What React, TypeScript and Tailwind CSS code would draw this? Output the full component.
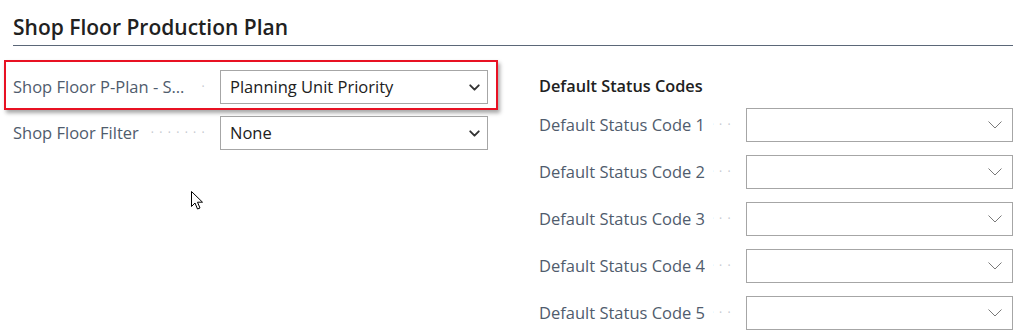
import { ChevronDown } from 'lucide-react'

const font = { fontFamily: '"Open Sans", "Noto Sans", sans-serif' }

function Dots() {
  return (
    <span className="flex-1 min-w-[10px] flex justify-end overflow-hidden whitespace-nowrap text-[#c4c8ce] text-[12px] tracking-[5.3px] mr-[10px] ml-[8px]">
      <span>{'·'.repeat(30)}</span>
    </span>
  )
}

function NativeSelect({ value }: { value: string }) {
  return (
    <div className="w-[268px] h-[34px] border border-[#a6a6a6] bg-white flex items-center pl-[9px] pr-[4px] text-[16.5px] text-[#212121]">
      <span className="flex-1 truncate">{value}</span>
      <ChevronDown size={17} strokeWidth={2.7} className="text-[#333]" />
    </div>
  )
}

function LookupBox() {
  return (
    <div className="w-[267px] h-[34px] border border-[#a6a6a6] bg-white flex items-center justify-end pr-[10px]">
      <svg width="14" height="8" viewBox="0 0 14 8" fill="none">
        <polyline points="0.5,0.5 7,7 13.5,0.5" stroke="#7a7a7a" strokeWidth="1" />
      </svg>
    </div>
  )
}

function FieldRow({ label, children }: { label: string; children: React.ReactNode }) {
  return (
    <div className="flex items-center h-[34px]">
      <div className="w-[207px] flex items-center text-[16.5px] text-[#505c6d]">
        <span className="truncate">{label}</span>
        <Dots />
      </div>
      {children}
    </div>
  )
}

export default function App() {
  const codes = [1, 2, 3, 4, 5]

  return (
    <div className="relative w-[1029px] h-[334px] bg-white overflow-hidden" style={font}>
      {/* Group header */}
      <div className="ml-[13px] mr-[16px] pt-[13px] pb-[4px] border-b border-[#5b6778]">
        <h2 className="text-[21px] font-semibold text-[#212121] leading-[28px]">Shop Floor Production Plan</h2>
      </div>

      <div className="flex pl-[13px] pr-[16px]">
        {/* General */}
        <div className="w-[475px] flex flex-col gap-[12px] pt-[24px]">
          <FieldRow label="Shop Floor P-Plan - Sorting">
            <NativeSelect value="Planning Unit Priority" />
          </FieldRow>
          <FieldRow label="Shop Floor Filter">
            <NativeSelect value="None" />
          </FieldRow>
        </div>

        {/* Default Status Codes */}
        <div className="ml-[51px] flex-1 flex flex-col pt-[29px]">
          <h3 className="text-[16.3px] font-semibold text-[#212121] leading-[22px] mb-[11px]">Default Status Codes</h3>
          <div className="flex flex-col gap-[13px]">
            {codes.map((n) => (
              <FieldRow key={n} label={`Default Status Code ${n}`}>
                <LookupBox />
              </FieldRow>
            ))}
          </div>
        </div>
      </div>

      {/* highlight annotation */}
      <div className="absolute left-[4px] top-[60px] w-[494px] h-[50px] border-2 border-[#e81123] shadow-[2px_3px_4px_rgba(0,0,0,0.35)]" />

      {/* mouse pointer */}
      <svg className="absolute left-[191px] top-[191px]" width="13" height="20" viewBox="0 0 13 20">
        <path d="M0.5 0.5 L0.5 15.5 L4 12 L6.5 18 L9 17 L6.5 11.2 L11.5 11.2 Z" fill="#fff" stroke="#000" strokeWidth="1" strokeLinejoin="round" />
      </svg>
    </div>
  )
}
